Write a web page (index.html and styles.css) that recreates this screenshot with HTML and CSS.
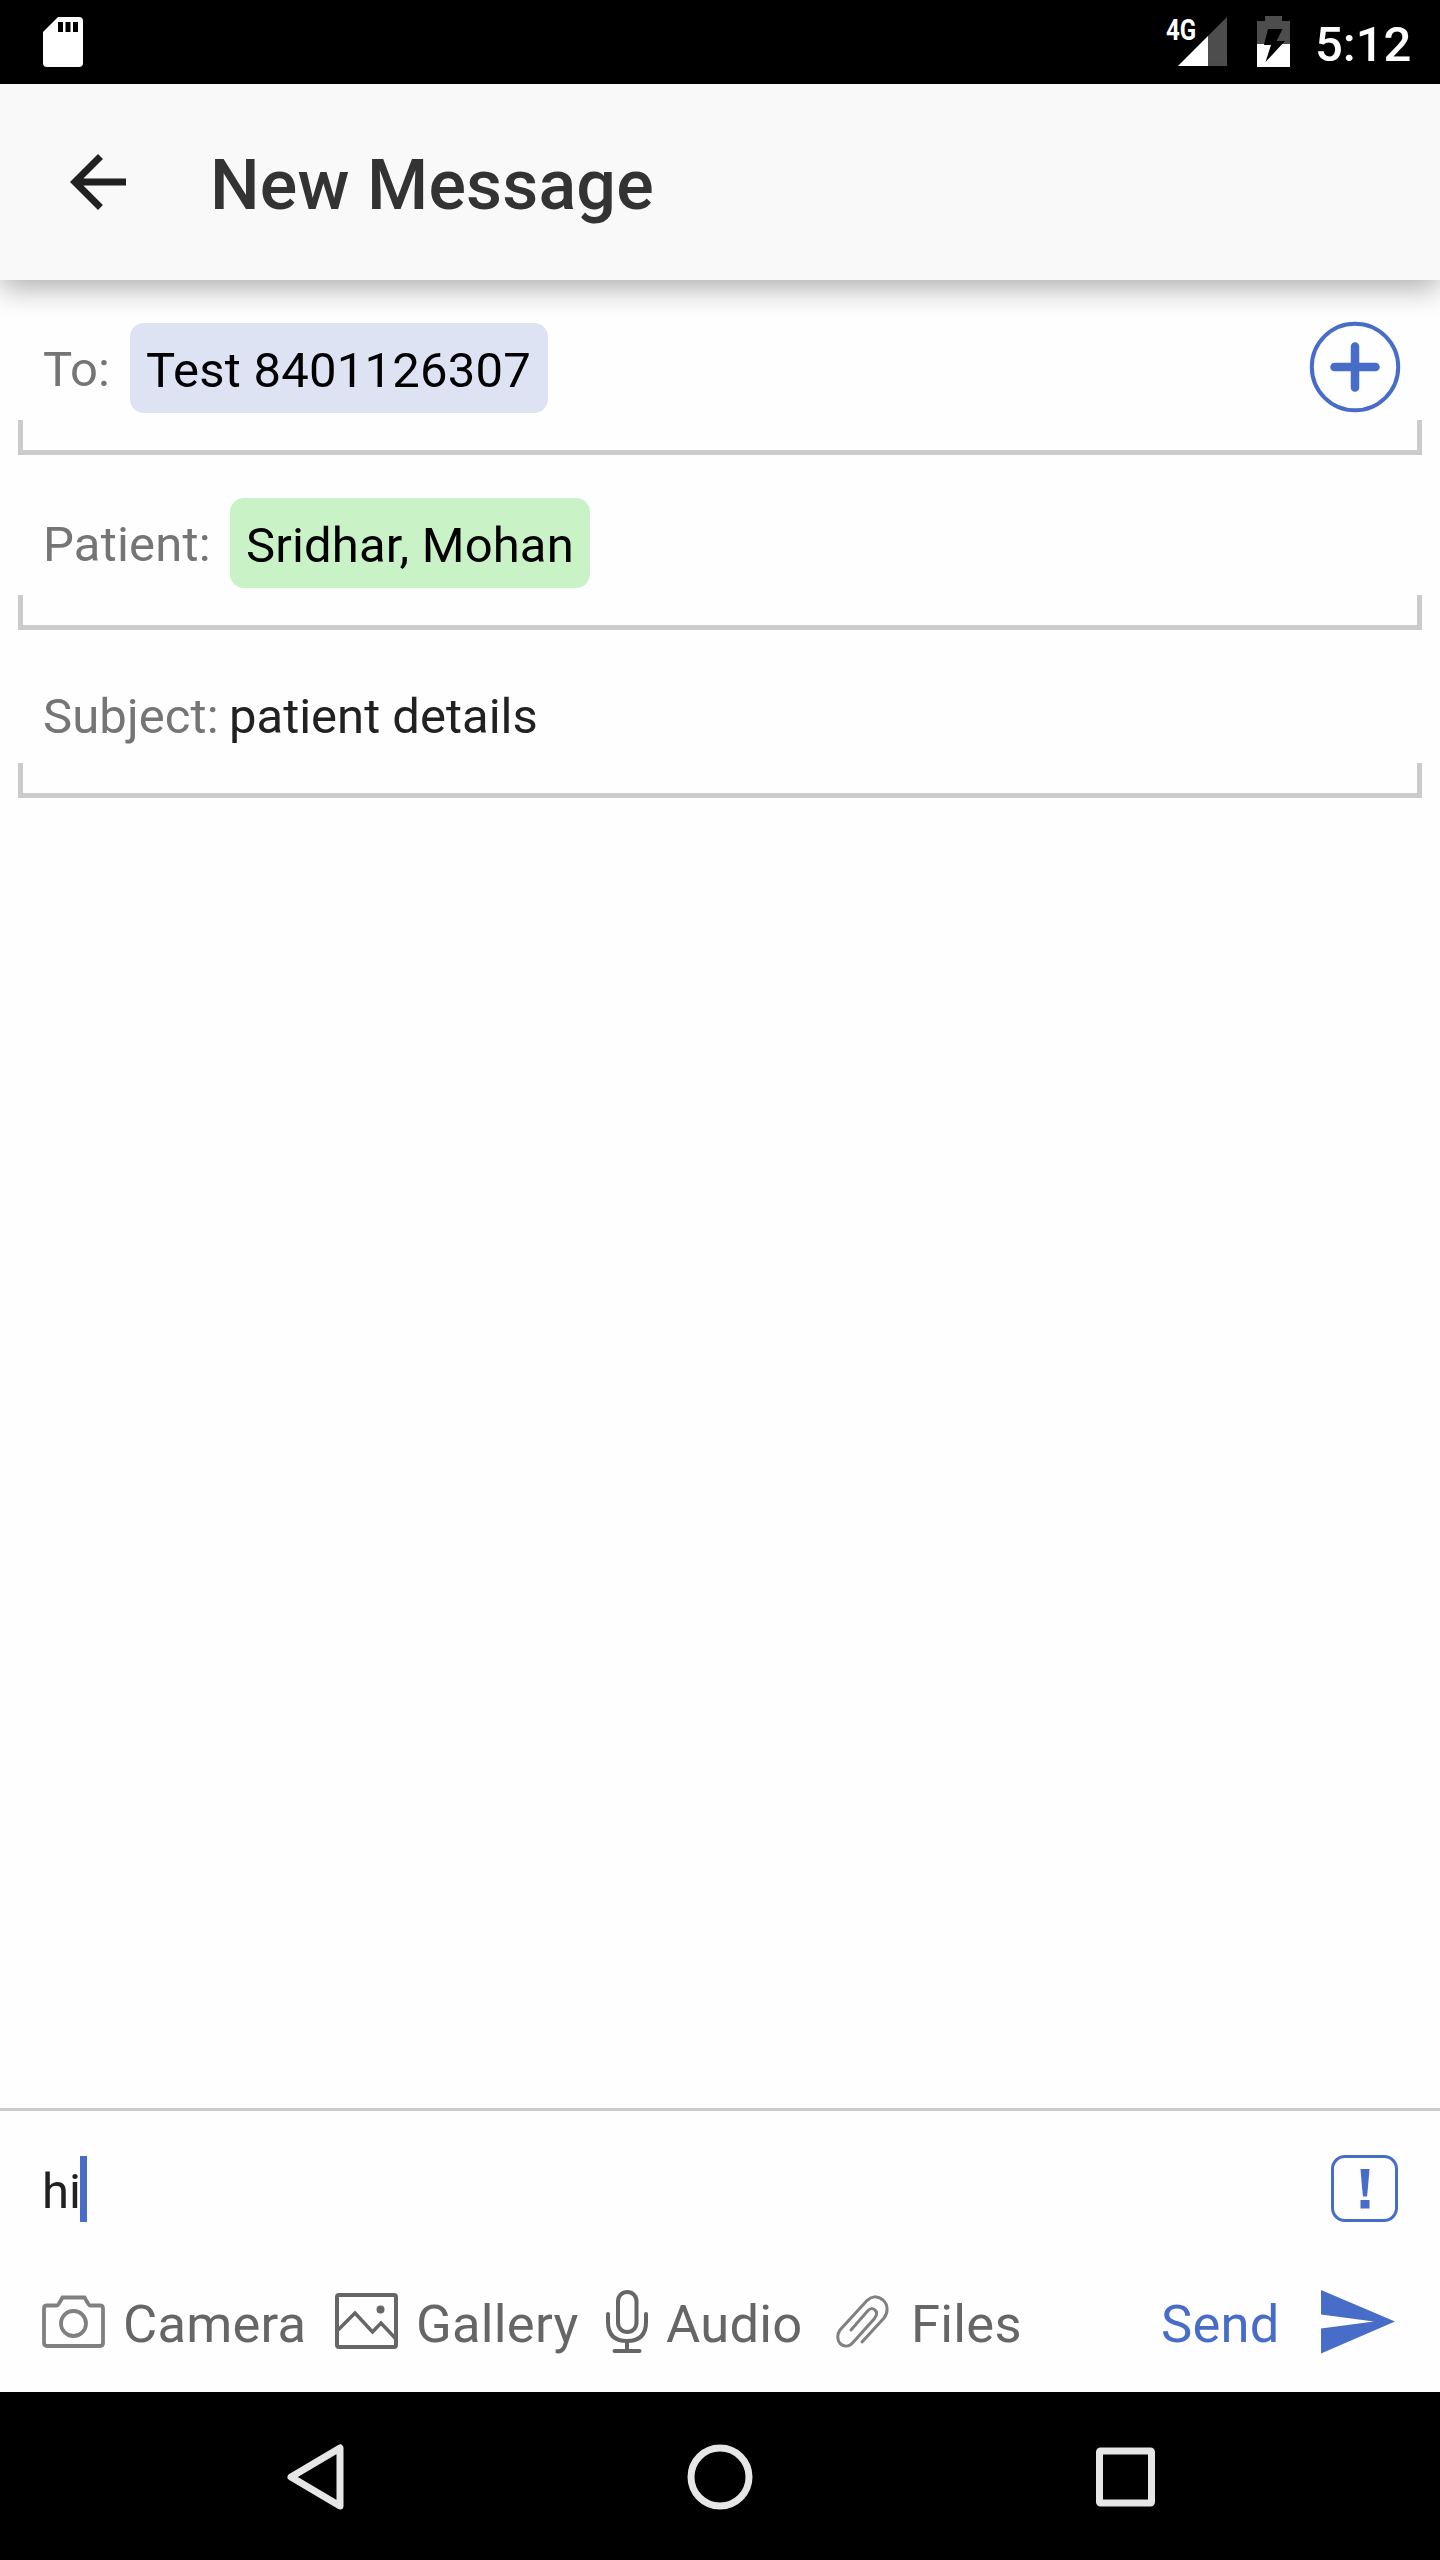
FILE: index.html
```html
<!DOCTYPE html>
<html lang="en">
<head>
<meta charset="utf-8">
<title>New Message</title>
<link rel="stylesheet" href="styles.css">
</head>
<body>
<div class="screen">
  <div class="status-bar">
    <svg class="sd" width="40" height="50" viewBox="0 0 40 50"><path d="M15 0H36a4 4 0 0 1 4 4V46a4 4 0 0 1-4 4H4a4 4 0 0 1-4-4V15Z" fill="#fff"/><path d="M15 5h5v10h-5zM22.500 5h5v10h-5zM30 5h5v10h-5z" fill="#000"/></svg>
    <span class="network">4G</span>
    <svg class="signal" width="49" height="49" viewBox="0 0 49 49"><path d="M49 0V49H0Z" fill="#4d4d4d"/><path d="M30 19V49H0Z" fill="#fff"/></svg>
    <svg class="battery" width="33" height="51" viewBox="0 0 33 51"><path d="M8 0H25V5H33V51H0V5H8Z" fill="#4d4d4d"/><path d="M0 28H33V51H0Z" fill="#fff"/><path d="M11 13H25.500L19.500 25H28L8.500 46L14 29H7Z" fill="#000"/></svg>
    <time class="clock">5:12</time>
  </div>
  <header class="app-bar">
    <svg width="84" height="84" viewBox="0 0 24 24"><path d="M20 11H7.830l5.590-5.590L12 4l-8 8 8 8 1.410-1.410L7.830 13H20v-2z" fill="#212121"/></svg>
    <h1 class="title">New Message</h1>
  </header>
  <main class="form">
    <div class="field">
      <div class="line"><span class="label label-to">To:</span><span class="chip chip-blue">Test 8401126307</span>
        <svg class="add" width="92" height="92" viewBox="0 0 92 92" fill="none" stroke="#476dc9" stroke-linecap="round"><circle cx="46" cy="46" r="43.200" stroke-width="4"/><path d="M25.500 46h41M46 25.500v41" stroke-width="8.500"/></svg>
      </div>
      <div class="bracket"></div>
    </div>
    <div class="field">
      <div class="line"><span class="label label-patient">Patient:</span><span class="chip chip-green">Sridhar, Mohan</span></div>
      <div class="bracket"></div>
    </div>
    <div class="field field-subject">
      <div class="line"><span class="label label-subject">Subject:</span><span class="value">patient details</span></div>
      <div class="bracket"></div>
    </div>
  </main>
  <section class="composer">
    <div class="message"><span class="typed">hi</span><span class="caret"></span><span class="urgent"><svg width="10" height="40" viewBox="0 0 10 40" fill="#476dc9"><path d="M.500 0h9l-1.500 18-1 9.500h-4l-1-9.500zM.500 31h9v8.500h-9z"/></svg></span></div>
    <div class="tools">
      <svg class="i-camera" width="63" height="60" viewBox="0 0 63 60" fill="none" stroke="#808080" stroke-width="3.800"><path d="M5 11.500H14.500Q16 11.500 17 9.500L20.500 3.500H42.500L46 9.500Q47 11.500 48.500 11.500H58Q61 11.500 61 14.500V49Q61 52 58 52H5Q2 52 2 49V14.500Q2 11.500 5 11.500Z"/><circle cx="31.500" cy="29.500" r="12.500"/></svg>
      <span class="tool t-camera">Camera</span>
      <svg class="i-gallery" width="63" height="56" viewBox="0 0 63 56" fill="none" stroke="#666" stroke-width="4"><rect x="2" y="2" width="59" height="52" rx="2"/><path d="M3 37L20 20L37.500 39L46 30L61 46" stroke-width="3.500"/><ellipse cx="45.500" cy="16.500" rx="4" ry="4" fill="#666" stroke="none"/></svg>
      <span class="tool t-gallery">Gallery</span>
      <svg class="i-mic" width="42" height="63" viewBox="0 0 42 63" fill="none" stroke="#666" stroke-width="4" stroke-linecap="round"><rect x="12" y="2" width="18.500" height="40" rx="9.200"/><path d="M2 24V32Q2 51 21 51Q40 51 40 32V24M21 51V60M8.500 61H33.500"/></svg>
      <span class="tool t-audio">Audio</span>
      <svg class="i-clip" width="53" height="53" viewBox="0 0 53 53" fill="none" stroke="#808080" stroke-width="3" stroke-linecap="round"><path d="M26 47L48 23C52 18 52.500 10 47 5C41 0 35 1.500 31 5.500L4 35C1 39 1 45 4 48.500C8 52 13 52 16.500 48L38.500 23.500C41 20 41.500 17 39 15C37 13 34 13.500 32 15.500L15 35"/></svg>
      <span class="tool t-files">Files</span>
      <span class="tool t-send">Send</span>
      <svg class="i-send" width="74" height="64" viewBox="0 0 74 64"><path d="M0 0L74 31.500L0 63.500V38.500L53 31.500L0 24.500Z" fill="#476dc9"/></svg>
    </div>
  </section>
  <nav class="nav-bar">
    <svg width="66" height="66" viewBox="0 0 66 66" fill="none" stroke="#e6e6e6" stroke-width="7" stroke-linejoin="round"><path d="M53 4V62L4 33Z"/></svg>
    <svg class="home" width="66" height="66" viewBox="0 0 66 66" fill="none" stroke="#e6e6e6" stroke-width="7"><circle cx="33" cy="33" r="29"/></svg>
    <svg class="recent" width="66" height="66" viewBox="0 0 66 66" fill="none" stroke="#e6e6e6" stroke-width="7"><rect x="6.500" y="7" width="52" height="52" rx="1"/></svg>
  </nav>
</div>
</body>
</html>
```
FILE: styles.css
```css
* { box-sizing: border-box; }
body { margin: 0; font-family: Roboto, sans-serif; background: #fefefe; }
svg { display: block; flex: none; overflow: visible; }
span, time, h1 { white-space: nowrap; }
.screen { width: 1440px; height: 2560px; display: flex; flex-direction: column; overflow: hidden; }
.status-bar { height: 84px; flex: none; background: #000; color: #fff; display: flex; align-items: flex-start; padding: 0 30px 0 43px; }
.sd { margin-top: 17px; }
.network { margin: 14px 0 0 auto; width: 12px; font: 700 29px/32px Roboto, sans-serif; transform: scaleX(.83); transform-origin: left; }
.signal { margin-top: 17px; }
.battery { margin: 16px 0 0 30px; }
.clock { width: 95px; margin: 16px 0 0 25px; font-size: 49px; line-height: 58px; font-weight: 500; }
.app-bar { height: 196px; flex: none; display: flex; align-items: center; padding-left: 56px; background: #f9f9f9; box-shadow: 0 8px 28px rgba(0, 0, 0, .32); position: relative; }
.title { margin: 5px 0 0 70px; font-size: 70px; line-height: 82px; font-weight: 500; letter-spacing: .15px; color: #333; }
.form { flex: 1; padding: 0 18px; }
.field { height: 175px; display: flex; flex-direction: column; justify-content: flex-end; }
.field-subject { height: 168px; }
.line { height: 90px; display: flex; align-items: center; padding-left: 25px; margin-bottom: 7px; font-size: 49px; line-height: 58px; }
.label { flex: none; color: #757575; padding-top: 3px; letter-spacing: .1px; }
.label-to { width: 87px; }
.label-patient { width: 187px; letter-spacing: .2px; }
.label-subject { width: 186px; }
.value { color: #212121; padding-top: 3px; }
.field-subject .line { height: 83px; }
.chip { height: 90px; line-height: 95px; padding: 0 16px; border-radius: 14px; color: #000; letter-spacing: .22px; }
.chip-blue { background: #dee3f4; width: 418px; }
.chip-green { background: #c9f2c7; width: 360px; letter-spacing: .15px; }
.add { margin: -2px 21px 0 auto; }
.bracket { height: 35px; border: 5px solid #cbcbcb; border-top: 0; }
.composer { height: 284px; flex: none; border-top: 3px solid #cbcbcb; padding-left: 42px; }
.message { height: 156px; display: flex; align-items: center; padding: 0 42px 0 0; font-size: 49px; color: #212121; }
.typed { width: 38px; line-height: 58px; padding-top: 5px; }
.caret { width: 7px; height: 66px; background: #476dc9; }
.urgent { width: 67px; height: 67px; margin: -1px 0 0 auto; border: 3.500px solid #476dc9; border-radius: 14px; display: flex; align-items: center; justify-content: center; }
.tools { display: flex; align-items: center; height: 108px; }
.tool { flex: none; font-size: 52.500px; line-height: 62px; letter-spacing: .25px; color: #666; margin-top: 5px; }
.i-camera { margin-top: 6px; }
.i-send { margin-top: 2px; }
.t-camera { width: 230px; padding-left: 18px; }
.t-gallery { width: 208px; padding-left: 18px; }
.t-audio { width: 188px; padding-left: 18px; }
.t-files { width: 270px; padding-left: 22px; }
.t-send { width: 162px; padding-left: 2px; color: #476dc9; }
.nav-bar { height: 168px; flex: none; background: #000; display: flex; align-items: center; padding: 1px 0 0 287px; }
.home { margin-left: 334px; }
.recent { margin-left: 340px; }
/* subject text sits lower in its row than the chip rows above */
.field-subject .label, .field-subject .value { padding-top: 4px; }
```
